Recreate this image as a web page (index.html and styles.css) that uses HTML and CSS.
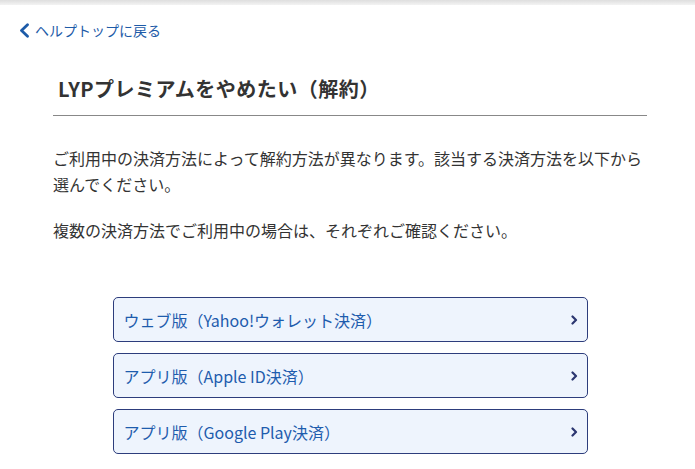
FILE: index.html
```html
<!DOCTYPE html>
<html lang="ja">
<head>
    <meta charset="utf-8">
    <title>LYPプレミアムをやめたい（解約）</title>
    <link rel="stylesheet" href="styles.css">
</head>
<body>
    <div class="topbar"></div>

    <!-- back link -->
    <div class="back">
        <a href="#" class="back-link">
            <svg class="back-icon" width="11" height="15" viewBox="0 0 11 15"><polyline points="8.5,1.8 2.5,7.5 8.5,13.2" fill="none" stroke="currentColor" stroke-width="2.8" stroke-linecap="round" stroke-linejoin="round"/></svg>
            ヘルプトップに戻る
        </a>
    </div>

    <div class="main">
        <h1 class="title">LYPプレミアムをやめたい（解約）</h1>

        <p class="text">ご利用中の決済方法によって解約方法が異なります。該当する決済方法を以下から選んでください。</p>
        <p class="text">複数の決済方法でご利用中の場合は、それぞれご確認ください。</p>

        <!-- payment methods -->
        <div class="methods">
            <a href="#" class="method">
                <span>ウェブ版（Yahoo!ウォレット決済）</span>
                <svg class="chev" width="7" height="10" viewBox="0 0 7 10"><polyline points="1.5,1.5 5,5 1.5,8.5" fill="none" stroke="currentColor" stroke-width="2.2" stroke-linecap="round" stroke-linejoin="round"/></svg>
            </a>
            <a href="#" class="method">
                <span>アプリ版（Apple ID決済）</span>
                <svg class="chev" width="7" height="10" viewBox="0 0 7 10"><polyline points="1.5,1.5 5,5 1.5,8.5" fill="none" stroke="currentColor" stroke-width="2.2" stroke-linecap="round" stroke-linejoin="round"/></svg>
            </a>
            <a href="#" class="method">
                <span>アプリ版（Google Play決済）</span>
                <svg class="chev" width="7" height="10" viewBox="0 0 7 10"><polyline points="1.5,1.5 5,5 1.5,8.5" fill="none" stroke="currentColor" stroke-width="2.2" stroke-linecap="round" stroke-linejoin="round"/></svg>
            </a>
        </div>
    </div>
</body>
</html>
```

FILE: styles.css
```css
body { margin: 0; background: #fff; color: #333; font-family: "Noto Sans CJK JP", "Noto Sans", sans-serif; }
a { text-decoration: none; }

.topbar { height: 5px; background: linear-gradient(#dedede, #f3f3f3); }

.back { display: flex; padding: 15px 0 0 19px; }
.back-link { display: flex; align-items: center; gap: 5px; color: #1d5ba8; font-size: 14px; line-height: 20px; }
.back-icon { display: block; }

.main { padding: 0 48px 0 53px; }
.title { margin: 34px 0 0; padding: 0 0 12px 5px; font-size: 20px; line-height: 29px; font-weight: bold; letter-spacing: 0.5px; color: #333; border-bottom: 1px solid #888; }

.text { margin: 0; font-size: 16px; line-height: 26px; }
.text:first-of-type { margin-top: 29px; }
.text + .text { margin-top: 20px; }

.methods { display: flex; flex-direction: column; gap: 11px; width: 475px; margin: 54px auto 0; }
.method { display: flex; align-items: center; justify-content: space-between; box-sizing: border-box; height: 45px; padding: 0 9px 0 10px; background: #eef4fd; border: 1px solid #2d3d7c; border-radius: 5px; color: #1e5cad; font-size: 16px; }
.chev { display: block; color: #2b3670; }
```
